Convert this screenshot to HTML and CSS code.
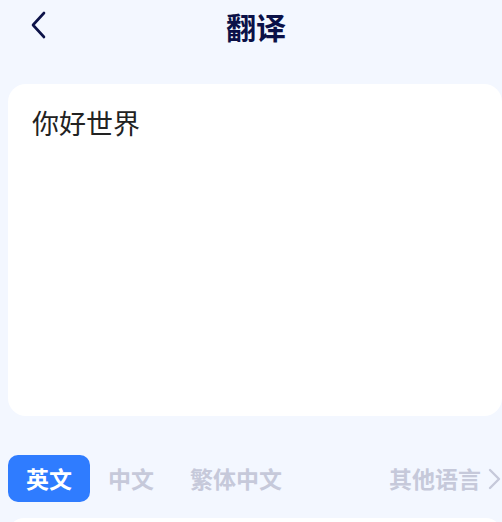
FILE: index.html
```html
<!DOCTYPE html>
<html lang="zh-CN">
<head>
<meta charset="utf-8">
<title>翻译</title>
<link rel="stylesheet" href="styles.css">
</head>
<body>
<div class="page">
  <header class="header">
    <button class="back" aria-label="返回">
      <svg width="16" height="28" viewBox="0 0 16 28"><path d="M14 2 L3 14 L14 26" fill="none" stroke="#0c1249" stroke-width="2.6" stroke-linecap="round" stroke-linejoin="round"/></svg>
    </button>
    <h1 class="title">翻译</h1>
  </header>
  <section class="input-card">
    <p class="input-text">你好世界</p>
  </section>
  <nav class="tabs">
    <span class="tab active">英文</span>
    <span class="tab">中文</span>
    <span class="tab">繁体中文</span>
    <span class="tab more">其他语言
      <svg width="16" height="24" viewBox="0 0 16 24"><path d="M4 3 L13 12 L4 21" fill="none" stroke="#c6c9da" stroke-width="2.4" stroke-linecap="round" stroke-linejoin="round"/></svg>
    </span>
  </nav>
  <section class="result-card"></section>
</div>
</body>
</html>
```
FILE: styles.css
```css
html, body {
  margin: 0;
  padding: 0;
  background: #f3f7ff;
  overflow: hidden;
}
body {
  font-family: "Noto Sans CJK SC", "Noto Sans", sans-serif;
}
.page {
  width: 494px;
  padding: 0 8px;
}
.header {
  position: relative;
  height: 52px;
  display: flex;
  align-items: center;
  justify-content: center;
}
.back {
  position: absolute;
  left: 22px;
  top: 11px;
  padding: 0;
  border: 0;
  background: none;
  display: flex;
}
.title {
  margin: 0;
  font-size: 30px;
  font-weight: 700;
  color: #0b1148;
  line-height: 52px;
  padding-left: 2px;
}
.input-card {
  margin-top: 32px;
  height: 332px;
  background: #ffffff;
  border-radius: 18px;
  padding: 20px 24px;
  box-sizing: border-box;
}
.input-text {
  margin: 0;
  font-size: 27px;
  line-height: 38px;
  color: #222222;
}
.tabs {
  margin-top: 39px;
  display: flex;
  align-items: center;
}
.tab {
  height: 47px;
  line-height: 47px;
  padding: 0 18px;
  font-size: 23px;
  font-weight: 700;
  color: #c6c9da;
  border-radius: 10px;
}
.tab.active {
  background: #2f7cff;
  color: #ffffff;
}
.tab.more {
  margin-left: auto;
  padding: 0;
  display: flex;
  align-items: center;
  gap: 5px;
}
.result-card {
  margin-top: 16px;
  height: 200px;
  background: #ffffff;
  border-radius: 16px;
}
```
